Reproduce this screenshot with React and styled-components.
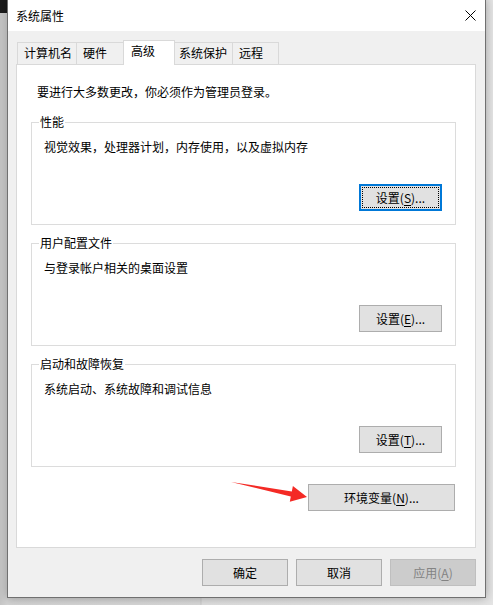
import React from "react";
import styled, { createGlobalStyle } from "styled-components";

const GlobalStyle = createGlobalStyle`
    html, body {
        margin: 0;
        padding: 0;
        background: #d4d4d4;
    }
    body {
        font-family: "Noto Sans CJK SC", "Noto Sans", sans-serif;
        font-size: 12px;
        color: #000;
    }
`;

const Desktop = styled.div`
    position: relative;
    width: 493px;
    height: 605px;
    overflow: hidden;
    background: linear-gradient(90deg, #c4c4c4 0px, #d2d2d2 7px, #d8d8d8 200px, #c9c9c9 201px, #dedede 202px, #e4e4e4 100%);
`;

const BackdropPatch = styled.div`
    position: absolute;
    left: 0;
    top: 0;
    width: 7px;
    height: 13px;
    background: #1b1b1b;
`;

const Window = styled.div`
    position: absolute;
    left: 7px;
    top: -1px;
    width: 479px;
    height: 599px;
    box-sizing: border-box;
    border: 1px solid #707070;
    background: #f0f0f0;
    box-shadow: 0 0 9px rgba(0, 0, 0, 0.3);
    display: flex;
    flex-direction: column;
`;

const TitleBar = styled.div`
    height: 31px;
    flex-shrink: 0;
    background: #fff;
    display: flex;
    align-items: center;
    justify-content: space-between;
    padding: 0 9px 0 8px;
`;

const Title = styled.div`
    font-size: 12px;
    line-height: 16px;
`;

const Body = styled.div`
    flex: 1;
    display: flex;
    flex-direction: column;
    padding: 11px 9px 11px 8px;
`;

const TabStrip = styled.div`
    display: flex;
    align-items: flex-start;
    height: 22px;
    padding-left: 1px;
`;

const Tab = styled.div`
    position: relative;
    box-sizing: border-box;
    width: ${({ $w }) => $w}px;
    height: 22px;
    margin-left: -1px;
    border: 1px solid #d9d9d9;
    border-bottom: none;
    background: #f0f0f0;
    padding: 0 0 1px 6px;
    display: flex;
    align-items: center;
    line-height: 16px;

    &:first-child {
        margin-left: 0;
    }

    ${({ $active, $w }) =>
        $active &&
        `
        z-index: 1;
        width: ${$w + 4}px;
        height: 25px;
        margin: -2px -2px -1px -3px;
        background: #fff;
        padding: 0 0 4px 7px;
    `}
`;

const Panel = styled.div`
    box-sizing: border-box;
    height: 484px;
    background: #fff;
    border: 1px solid #d9d9d9;
    padding: 19px 19px 0 14px;
    display: flex;
    flex-direction: column;
`;

const Intro = styled.div`
    padding-left: 6px;
    line-height: 16px;
`;

const Group = styled.div`
    position: relative;
    box-sizing: border-box;
    height: 103px;
    margin-top: ${({ $gap }) => $gap}px;
    border: 1px solid #dcdcdc;
    padding: 16px 13px 13px 12px;
    display: flex;
    flex-direction: column;
`;

const Legend = styled.span`
    position: absolute;
    top: -9px;
    left: 7px;
    padding: 0 1px;
    background: #fff;
    line-height: 16px;
`;

const GroupText = styled.div`
    line-height: 16px;
`;

const Button = styled.button`
    box-sizing: border-box;
    width: ${({ $w }) => $w || 83}px;
    height: 27px;
    padding: 0;
    background: ${({ disabled }) => (disabled ? "#cccccc" : "#e1e1e1")};
    border: 1px solid ${({ disabled }) => (disabled ? "#bfbfbf" : "#adadad")};
    color: ${({ disabled }) => (disabled ? "#838383" : "#000")};
    font-family: "Noto Sans CJK SC", "Noto Sans", sans-serif;
    font-size: 12px;
    line-height: 16px;
    display: flex;
    align-items: center;
    justify-content: center;

    ${({ $default }) =>
        $default &&
        `
        border: 2px solid #0078d7;
        outline: 1px dotted #000;
        outline-offset: -4px;
    `}
`;

const GroupButton = styled(Button)`
    margin-top: auto;
    align-self: flex-end;
`;

const EnvButton = styled(Button)`
    margin-top: 17px;
    margin-right: 1px;
    align-self: flex-end;
`;

const Key = styled.span`
    text-decoration: underline;
    text-underline-offset: 2px;
`;

const Footer = styled.div`
    display: flex;
    justify-content: flex-end;
    gap: 8px;
    margin-top: 11px;
    padding-right: 0;
`;

const Arrow = styled.svg`
    position: absolute;
    left: 0;
    top: 0;
    pointer-events: none;
`;

const tabs = [
    { label: "计算机名", w: 60 },
    { label: "硬件", w: 50 },
    { label: "高级", w: 48, active: true },
    { label: "系统保护", w: 61 },
    { label: "远程", w: 47 },
];

const groups = [
    { title: "性能", text: "视觉效果，处理器计划，内存使用，以及虚拟内存", key: "S", isDefault: true, gap: 22 },
    { title: "用户配置文件", text: "与登录帐户相关的桌面设置", key: "E", gap: 18 },
    { title: "启动和故障恢复", text: "系统启动、系统故障和调试信息", key: "T", gap: 18 },
];

const CloseIcon = () => (
    <svg width="11" height="11" viewBox="0 0 11 11">
        <path d="M0.5 0.5 L10.5 10.5 M10.5 0.5 L0.5 10.5" stroke="#000" strokeWidth="1" fill="none" />
    </svg>
);

const App = () => {
    return (
        <>
            <GlobalStyle />
            <Desktop>
                <BackdropPatch />
                <Window>
                    <TitleBar>
                        <Title>系统属性</Title>
                        <CloseIcon />
                    </TitleBar>
                    <Body>
                        <TabStrip>
                            {tabs.map((tab) => (
                                <Tab key={tab.label} $w={tab.w} $active={tab.active}>
                                    {tab.label}
                                </Tab>
                            ))}
                        </TabStrip>
                        <Panel>
                            <Intro>要进行大多数更改，你必须作为管理员登录。</Intro>
                            {groups.map((group) => (
                                <Group key={group.title} $gap={group.gap}>
                                    <Legend>{group.title}</Legend>
                                    <GroupText>{group.text}</GroupText>
                                    <GroupButton $default={group.isDefault}>
                                        设置(<Key>{group.key}</Key>)...
                                    </GroupButton>
                                </Group>
                            ))}
                            <EnvButton $w={147}>
                                环境变量(<Key>N</Key>)...
                            </EnvButton>
                        </Panel>
                        <Footer>
                            <Button $w={86}>确定</Button>
                            <Button $w={86}>取消</Button>
                            <Button $w={86} disabled>
                                应用(<Key>A</Key>)
                            </Button>
                        </Footer>
                    </Body>
                </Window>
                <Arrow width="493" height="605" viewBox="0 0 493 605">
                    <polygon
                        points="231,482 291.8,491.4 292.9,486 307,497 289.8,501.7 290.8,496.4"
                        fill="#f42a25"
                    />
                </Arrow>
            </Desktop>
        </>
    );
};

export default App;
